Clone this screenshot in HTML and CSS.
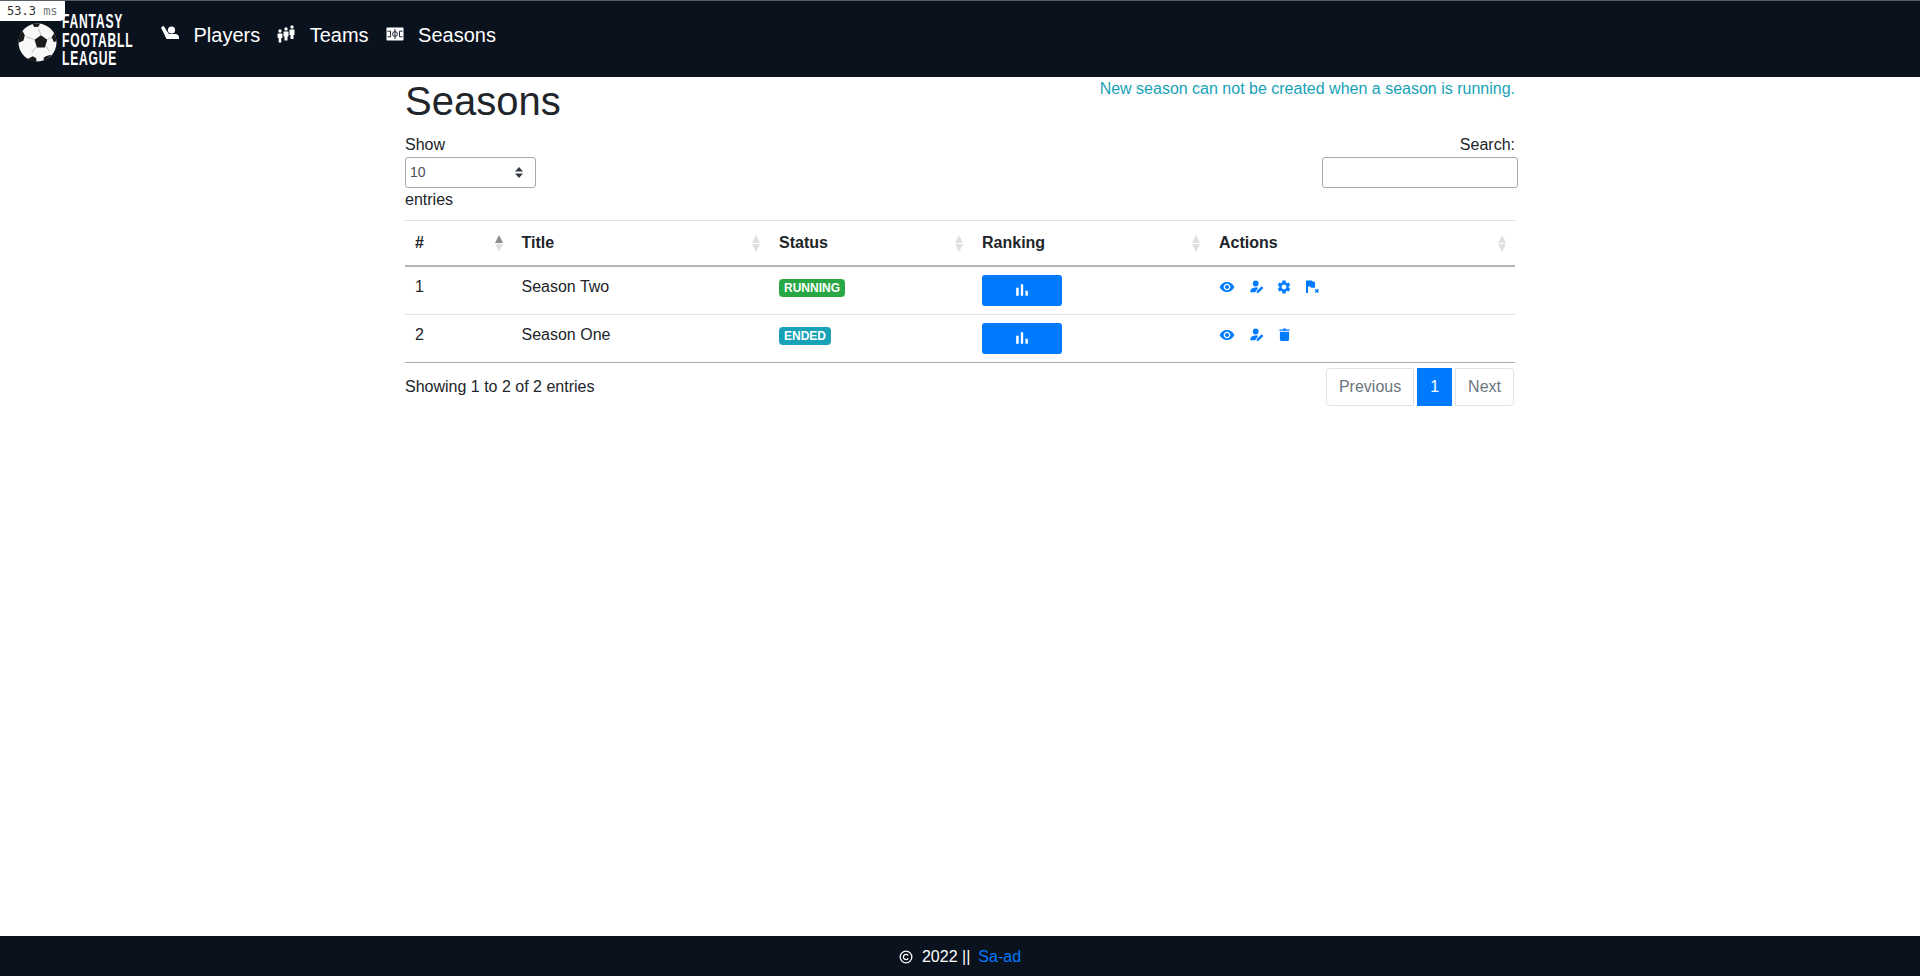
FILE: index.html
```html
<!DOCTYPE html>
<html lang="en">
<head>
<meta charset="utf-8">
<title>Seasons</title>
<link rel="stylesheet" href="styles.css">
</head>
<body>
<div class="timer">53.3 <span class="timer-unit">ms</span></div>
<nav class="navbar">
  <a class="brand" href="#">
    <svg class="ball" viewBox="0 0 40 40">
      <circle cx="20" cy="20" r="19.5" fill="#f8f8f8"/>
      <path fill="none" stroke="#a8a8a8" stroke-width=".7" d="M23.500 12 21 6M16.500 17 8 14M18 25l-4 6M29 24l3 5M30 17l6-3"/>
      <path fill="#1c1c1c" d="M23.500 12.500l6.500 4.700-2.400 7.800h-8.200l-2.400-7.800zM15 .8c2.500-.5 5-.5 7.500 0l-1.500 3-4.500.3zM4.500 8l2.500 4.500-1.300 5.500-5.400 2.500C.2 15.500 1.500 11.500 4.500 8zM37 10.500c1.500 2.500 2.300 5 2.500 8l-2.700 1.200-2.300-5zM10 36.800 15 34l3.500 2 .7 3.500c-3.300.2-6.400-.8-9.200-2.700zM28.500 34l5-1.500.4.700c-2 2.500-4.400 4.500-7.400 5.500l-.2-3z"/>
    </svg>
    <span class="brand-text">FANTASY<br>FOOTABLL<br>LEAGUE</span>
  </a>
  <a class="nav-link" href="#">
    <svg class="nav-icon" viewBox="0 0 18 18"><circle cx="10.500" cy="5" r="3.600" fill="#fff"/><path fill="#fff" d="M0 2.500 2.600.7 6 6.300 8 9h6.500c2 0 3.500 1.300 3.500 3.500v1.500H5.500z"/></svg>
    <span>Players</span>
  </a>
  <a class="nav-link" href="#">
    <svg class="nav-icon" viewBox="0 0 18 18"><g fill="#fff"><circle cx="3" cy="6" r="1.700"/><path d="M.6 8.500h4.800v4.500H4.300v4.500H1.700V13H.6z"/><circle cx="9" cy="4" r="1.700"/><path d="M6.500 6.500h5v5h-1v4H7.500v-4h-1z"/><circle cx="15" cy="2" r="1.700"/><path d="M12.500 4.500h5v5.500h-1v4h-3v-4h-1z"/></g></svg>
    <span>Teams</span>
  </a>
  <a class="nav-link" href="#">
    <svg class="nav-icon" viewBox="0 0 18 18"><rect x=".5" y="2.500" width="17" height="13" rx=".8" fill="#fff"/><g fill="none" stroke="#0a121e" stroke-width=".9"><path d="M1.500 6.200h3v5.600h-3M16.500 6.200h-3v5.600h3M9 4v10"/><circle cx="9" cy="9" r="2.400"/></g></svg>
    <span>Seasons</span>
  </a>
</nav>

<main class="container">
  <div class="page-head">
    <h1 class="page-title">Seasons</h1>
    <p class="notice">New season can not be created when a season is running.</p>
  </div>

  <div class="filters">
    <label class="length">
      <span class="length-line">Show</span>
      <select class="length-select"><option>10</option></select>
      <span class="length-line">entries</span>
    </label>
    <label class="search">
      <span class="length-line">Search:</span>
      <input class="search-input" type="search">
    </label>
  </div>

  <table class="seasons">
    <colgroup>
      <col class="col-num"><col class="col-title"><col class="col-status"><col class="col-rank"><col class="col-actions">
    </colgroup>
    <thead>
      <tr>
        <th class="sort sort-asc">#</th>
        <th class="sort">Title</th>
        <th class="sort">Status</th>
        <th class="sort">Ranking</th>
        <th class="sort">Actions</th>
      </tr>
    </thead>
    <tbody>
      <tr>
        <td>1</td>
        <td>Season Two</td>
        <td><span class="badge badge-success">RUNNING</span></td>
        <td><a class="rank-btn" href="#"><svg class="rank-icon" viewBox="0 0 24 24"><path d="M5 9.200h3V19H5zM10.600 5h2.800v14h-2.800zm5.600 8H19v6h-2.800z"/></svg></a></td>
        <td>
          <div class="actions">
            <svg class="act act-eye" viewBox="0 0 24 24"><path d="M12 4.500C7 4.500 2.730 7.610 1 12c1.730 4.390 6 7.500 11 7.500s9.270-3.110 11-7.500c-1.730-4.390-6-7.500-11-7.500zM12 17c-2.760 0-5-2.240-5-5s2.240-5 5-5 5 2.240 5 5-2.240 5-5 5zm0-8c-1.660 0-3 1.340-3 3s1.340 3 3 3 3-1.340 3-3-1.340-3-3-3z"/></svg>
            <svg class="act act-person" viewBox="0 0 16 16"><circle cx="6.500" cy="4" r="3.300"/><path d="M.5 14v-1.800C.5 10 3.500 8.500 6.500 8.500c1 0 2 .15 3 .45L5.800 14zM7.500 14.800l.3-2.300 5.500-5.500 2 2-5.500 5.500z"/></svg>
            <svg class="act act-gear" viewBox="0 0 24 24"><path d="M19.140 12.940c.04-.3.060-.61.060-.94 0-.32-.02-.64-.07-.94l2.030-1.580c.18-.14.230-.41.120-.61l-1.920-3.320c-.12-.22-.37-.29-.59-.22l-2.390.96c-.5-.38-1.030-.7-1.620-.94l-.36-2.540c-.04-.24-.24-.41-.48-.41h-3.840c-.24 0-.43.170-.47.410l-.36 2.540c-.59.240-1.130.570-1.620.940l-2.390-.96c-.22-.08-.47 0-.59.220L2.740 8.870c-.12.210-.08.470.120.610l2.030 1.580c-.05.3-.09.630-.09.940s.020.640.070.940l-2.030 1.580c-.18.140-.23.410-.12.610l1.920 3.320c.12.220.370.290.590.220l2.390-.96c.5.380 1.030.7 1.620.940l.36 2.540c.05.240.240.410.480.410h3.840c.24 0 .44-.17.47-.41l.36-2.540c.59-.24 1.130-.56 1.620-.94l2.390.96c.22.080.47 0 .59-.22l1.920-3.320c.12-.22.070-.47-.12-.61l-2.010-1.580zM12 15.600c-1.980 0-3.600-1.620-3.600-3.600s1.620-3.600 3.600-3.600 3.600 1.620 3.600 3.600-1.620 3.600-3.600 3.600z"/></svg>
            <svg class="act act-flag" viewBox="0 0 14 14"><path d="M0 .5h6l.8 1.300H9v6H5l-.7-1.300H2V13H0z"/><path fill="none" stroke="#007bff" stroke-width="1.400" d="M9.200 9.200l3.300 3.300M12.500 9.200l-3.300 3.300"/></svg>
          </div>
        </td>
      </tr>
      <tr>
        <td>2</td>
        <td>Season One</td>
        <td><span class="badge badge-info">ENDED</span></td>
        <td><a class="rank-btn" href="#"><svg class="rank-icon" viewBox="0 0 24 24"><path d="M5 9.200h3V19H5zM10.600 5h2.800v14h-2.800zm5.600 8H19v6h-2.800z"/></svg></a></td>
        <td>
          <div class="actions">
            <svg class="act act-eye" viewBox="0 0 24 24"><path d="M12 4.500C7 4.500 2.730 7.610 1 12c1.730 4.390 6 7.500 11 7.500s9.270-3.110 11-7.500c-1.730-4.390-6-7.500-11-7.500zM12 17c-2.760 0-5-2.240-5-5s2.240-5 5-5 5 2.240 5 5-2.240 5-5 5zm0-8c-1.660 0-3 1.340-3 3s1.340 3 3 3 3-1.340 3-3-1.340-3-3-3z"/></svg>
            <svg class="act act-person" viewBox="0 0 16 16"><circle cx="6.500" cy="4" r="3.300"/><path d="M.5 14v-1.800C.5 10 3.500 8.500 6.500 8.500c1 0 2 .15 3 .45L5.800 14zM7.500 14.800l.3-2.300 5.500-5.500 2 2-5.500 5.500z"/></svg>
            <svg class="act act-trash" viewBox="0 0 12 14"><path d="M1 4h10v8.500c0 .8-.7 1.500-1.500 1.500h-7C1.700 14 1 13.300 1 12.500zM.5 1.500H4L4.700.5h2.600L8 1.500h3.500V3H.5z"/></svg>
          </div>
        </td>
      </tr>
    </tbody>
  </table>

  <div class="table-foot">
    <div class="info">Showing 1 to 2 of 2 entries</div>
    <ul class="pager">
      <li class="page page-first">Previous</li>
      <li class="page page-active">1</li>
      <li class="page page-last">Next</li>
    </ul>
  </div>
</main>

<footer class="footer">
  <svg class="copy-icon" viewBox="0 0 14 14"><circle cx="7" cy="7" r="5.800" fill="none" stroke="#fff" stroke-width="1.300"/><path d="M9.200 8.400a2.600 2.600 0 1 1 0-2.800" fill="none" stroke="#fff" stroke-width="1.300"/></svg>
  <span class="copy-text">2022 ||</span>
  <a class="copy-link" href="#">Sa-ad</a>
</footer>
</body>
</html>
```

FILE: styles.css
```css
* {
  box-sizing: border-box;
}

html,
body {
  height: 100%;
}

body {
  margin: 0;
  min-height: 976px;
  display: flex;
  flex-direction: column;
  font-family: "Liberation Sans", Arial, sans-serif;
  font-size: 16px;
  line-height: 24px;
  color: #212529;
  background: #fff;
}

a {
  text-decoration: none;
}

.timer {
  position: absolute;
  top: 1px;
  left: 0;
  z-index: 5;
  width: 65px;
  height: 20px;
  padding-left: 7px;
  background: #fff;
  border-bottom-right-radius: 5px;
  font-family: "DejaVu Sans Mono", monospace;
  font-size: 12px;
  line-height: 21px;
  color: #303030;
  white-space: nowrap;
}

.timer-unit {
  color: #777;
}

.navbar {
  flex: none;
  height: 77px;
  display: flex;
  align-items: flex-start;
  padding-left: 18px;
  background: #0a121e;
  border-top: 1px solid #5a5f66;
}

.brand {
  flex: none;
  display: flex;
  align-items: flex-start;
  width: 143px;
  color: #fff;
}

.ball {
  width: 39px;
  height: 39px;
  margin-top: 22px;
  flex: none;
}

.brand-text {
  display: block;
  flex: none;
  margin: 11px 0 0 5px;
  font-family: "Liberation Sans", sans-serif;
  font-weight: 700;
  font-size: 19.500px;
  line-height: 18.700px;
  letter-spacing: 1.300px;
  color: #fff;
  white-space: nowrap;
  transform: scaleX(.62);
  transform-origin: 0 0;
}

.nav-link {
  display: flex;
  align-items: flex-start;
  margin-right: 17px;
  color: #fff;
  font-size: 20px;
  line-height: 30px;
  padding-top: 19px;
}

.nav-icon {
  width: 18px;
  height: 18px;
  margin: 5px 14.500px 0 0;
  flex: none;
}

.container {
  flex: 1;
  width: 1140px;
  margin: 0 auto;
  padding: 0 15px;
}

.page-head {
  display: flex;
  justify-content: space-between;
  align-items: flex-start;
}

.page-title {
  margin: 0;
  font-size: 40px;
  line-height: 48px;
  font-weight: 400;
}

.notice {
  margin: 0;
  color: #17a2b8;
}

.filters {
  display: flex;
  justify-content: space-between;
  align-items: flex-start;
  margin-top: 8px;
  height: 87px;
}

.length {
  display: flex;
  flex-direction: column;
  align-items: flex-start;
}

.length-line {
  display: block;
  height: 24px;
  line-height: 24px;
}

.length-select {
  appearance: none;
  width: 131px;
  height: 31px;
  padding: 0 0 2px 4px;
  border: 1px solid #aaa;
  border-radius: 3px;
  font-family: "Liberation Sans", sans-serif;
  font-size: 14px;
  color: #495057;
  background: #fff url("data:image/svg+xml,%3Csvg xmlns='http://www.w3.org/2000/svg' width='8' height='11'%3E%3Cpath fill='%23343a40' d='M4 0 8 4.500H0zM4 11 0 6.500h8z'/%3E%3C/svg%3E") no-repeat right 12px center;
}

.search {
  display: flex;
  flex-direction: column;
  align-items: flex-end;
  margin-right: -3px;
}

.search .length-line {
  margin-right: 3px;
}

.search-input {
  width: 196px;
  height: 31px;
  border: 1px solid #aaa;
  border-radius: 3px;
  background: #fff;
}

.seasons {
  width: 1110px;
  table-layout: fixed;
  border-collapse: collapse;
}

.col-num {
  width: 106.500px;
}

.col-title {
  width: 257.500px;
}

.col-status {
  width: 203px;
}

.col-rank {
  width: 237px;
}

.col-actions {
  width: 306px;
}

.seasons th {
  position: relative;
  height: 45px;
  padding: 9px 10px 9px;
  text-align: left;
  font-weight: 700;
  border-top: 1px solid #dee2e6;
  border-bottom: 2px solid #b5b5b8;
}

.sort::before,
.sort::after {
  content: "";
  position: absolute;
  right: 9px;
  border-left: 4px solid transparent;
  border-right: 4px solid transparent;
}

.sort::before {
  top: 14px;
  border-bottom: 8px solid #e0e0e0;
}

.sort::after {
  top: 23px;
  border-top: 8px solid #e0e0e0;
}

.sort-asc::before {
  border-bottom-color: #8a8a8a;
}

.seasons td {
  height: 48px;
  padding: 8px 10px 8px;
  vertical-align: top;
  border-bottom: 1px solid #dee2e6;
}

.seasons tbody tr:last-child td {
  border-bottom-color: #aaa;
}

.badge {
  display: inline-block;
  padding: 3px 5px;
  border-radius: 4px;
  font-size: 12px;
  font-weight: 700;
  line-height: 12px;
  color: #fff;
  vertical-align: 0;
}

.badge-success {
  background: #28a745;
}

.badge-info {
  background: #17a2b8;
}

.rank-btn {
  display: flex;
  align-items: center;
  justify-content: center;
  width: 80px;
  height: 31px;
  border-radius: 3px;
  background: #007bff;
}

.rank-icon {
  width: 20px;
  height: 20px;
  fill: #fff;
}

.actions {
  display: flex;
  align-items: center;
  height: 18px;
  margin-top: 3px;
  fill: #007bff;
}

.act {
  flex: none;
}

.act-eye {
  width: 16px;
  height: 16px;
  margin-right: 15px;
}

.act-person {
  width: 14px;
  height: 14px;
  margin-right: 12px;
}

.act-gear {
  width: 16px;
  height: 16px;
  margin-right: 14px;
}

.act-flag {
  width: 14px;
  height: 14px;
}

.act-trash {
  width: 11px;
  height: 13px;
  margin-left: 3px;
}

.table-foot {
  display: flex;
  justify-content: space-between;
  align-items: flex-start;
  padding: 5px 1px 0 0;
}

.info {
  padding-top: 7px;
}

.pager {
  display: flex;
  gap: 3px;
  margin: 0;
  padding: 0;
  list-style: none;
}

.page {
  height: 38px;
  padding: 6px 12px;
  border: 1px solid #dee2e6;
  color: #6c757d;
}

.page-first {
  border-radius: 4px 0 0 4px;
}

.page-last {
  border-radius: 0 4px 4px 0;
}

.page-active {
  border-color: #007bff;
  background: #007bff;
  color: #fff;
}

.footer {
  flex: none;
  height: 40px;
  display: flex;
  align-items: center;
  justify-content: center;
  gap: 7px;
  padding-top: 1px;
  background: #0a121e;
  color: #fff;
}

.copy-icon {
  width: 14px;
  height: 14px;
  margin-right: 2px;
}

.copy-link {
  margin-left: 1px;
  color: #007bff;
}
```
